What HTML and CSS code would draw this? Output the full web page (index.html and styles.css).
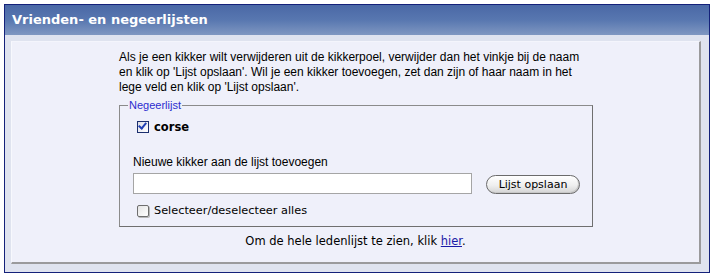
FILE: index.html
```html
<!DOCTYPE html>
<html>
<head>
<meta charset="utf-8">
<link rel="stylesheet" href="styles.css">
</head>
<body>
<div class="box">
  <div class="box-header">Vrienden- en negeerlijsten</div>
  <div class="box-body">
    <div class="panel">
      <div class="content">
        <p class="intro">Als je een kikker wilt verwijderen uit de kikkerpoel, verwijder dan het vinkje bij de naam en klik op 'Lijst opslaan'. Wil je een kikker toevoegen, zet dan zijn of haar naam in het lege veld en klik op 'Lijst opslaan'.</p>
        <fieldset class="list">
          <legend>Negeerlijst</legend>
          <label class="member"><input type="checkbox" class="cb cb-checked" checked><span>corse</span></label>
          <div class="add-label">Nieuwe kikker aan de lijst toevoegen</div>
          <div class="add-row">
            <input type="text" class="add-input">
            <button class="save">Lijst opslaan</button>
          </div>
          <label class="select-all"><input type="checkbox" class="cb cb-plain"><span>Selecteer/deselecteer alles</span></label>
        </fieldset>
      </div>
      <p class="footer">Om de hele ledenlijst te zien, klik <a href="#">hier</a>.</p>
    </div>
  </div>
</div>
</body>
</html>
```
FILE: styles.css
```css
html, body {
  margin: 0;
  padding: 0;
  background: #ffffff;
}
body {
  padding: 4px;
  font-family: "DejaVu Sans", Verdana, sans-serif;
}
.box {
  width: 704px;
  height: 267px;
  border: 1px solid #14217a;
  display: flex;
  flex-direction: column;
  background: #dfe3ef;
}
.box-header {
  height: 30px;
  box-sizing: border-box;
  padding: 0 0 1px 7px;
  display: flex;
  align-items: center;
  color: #ffffff;
  font-weight: bold;
  font-size: 13px;
  background: linear-gradient(#4a68a6, #5877b0 50%, #7f97c1);
}
.box-body {
  flex: 1;
  padding: 6px 8px 8px 6px;
  display: flex;
}
.panel {
  flex: 1;
  background: #eff0fa;
  border-top: 1px solid #f4f5fc;
  border-left: 1px solid #f7f8fd;
  border-right: 2px solid #9a9a9c;
  border-bottom: 2px solid #9a9a9c;
  display: flex;
  flex-direction: column;
  align-items: flex-start;
}
.content {
  margin-left: 107px;
  width: 462px;
}
.intro {
  margin: 8px 0 0 0;
  font-family: "Liberation Sans", Arial, sans-serif;
  font-size: 12px;
  line-height: 15px;
  color: #000;
}
.list {
  margin: 4px 0 0 0;
  padding: 0 12px 9px 13px;
  border: 1px solid #8b8b8b;
  border-right-color: #6f6f6f;
  border-bottom-color: #6f6f6f;
  display: flex;
  flex-direction: column;
  align-items: flex-start;
}
.list legend {
  padding: 0 1px;
  margin-left: -5px;
  font-family: "Liberation Sans", Arial, sans-serif;
  font-size: 11px;
  color: #2c2ccf;
}
.cb {
  -webkit-appearance: none;
  appearance: none;
  margin: 0;
  width: 12px;
  height: 12px;
  box-sizing: border-box;
  position: relative;
}
.cb-checked {
  border: 1px solid #1b2f6e;
  background: linear-gradient(135deg, #dcdde6, #ffffff);
}
.cb-checked::after {
  content: "";
  position: absolute;
  left: 2px;
  top: -1px;
  width: 3px;
  height: 6px;
  border: solid #1f3fb5;
  border-width: 0 2px 2px 0;
  transform: rotate(40deg);
}
.cb-plain {
  border: 1px solid #6e6e6e;
  border-radius: 2px;
  background: linear-gradient(135deg, #e4e4e4, #ffffff);
  box-shadow: 1px 1px 0 #b8b8b8;
}
.member {
  display: flex;
  align-items: center;
  gap: 5px;
  margin: 9px 0 0 4px;
  font-weight: bold;
  font-size: 11.5px;
}
.add-label {
  margin-top: 21px;
  font-family: "Liberation Sans", Arial, sans-serif;
  font-size: 12px;
}
.add-row {
  margin-top: 4px;
  display: flex;
  align-items: center;
  gap: 14px;
}
.add-input {
  width: 339px;
  height: 21px;
  box-sizing: border-box;
  border: 1px solid #a5a5a5;
  background: #fff;
  margin: 0;
  padding: 0 2px;
}
.save {
  width: 94px;
  height: 19px;
  padding: 0;
  white-space: nowrap;
  border: 1px solid #6b6b6b;
  border-radius: 10px;
  background: linear-gradient(#ffffff, #efefef 55%, #d4d4d4);
  box-shadow: inset -1px -1px 0 #c8c8c8;
  font-family: "DejaVu Sans", Verdana, sans-serif;
  font-size: 11px;
  color: #000;
  margin-top: 2px;
}
.select-all {
  display: flex;
  align-items: center;
  gap: 5px;
  margin: 10px 0 0 4px;
  font-size: 11.3px;
}
.footer {
  align-self: stretch;
  text-align: center;
  margin: 7px 0 0 0;
  font-size: 11.5px;
  color: #000;
}
.footer a {
  color: #1a1aa6;
}
```
